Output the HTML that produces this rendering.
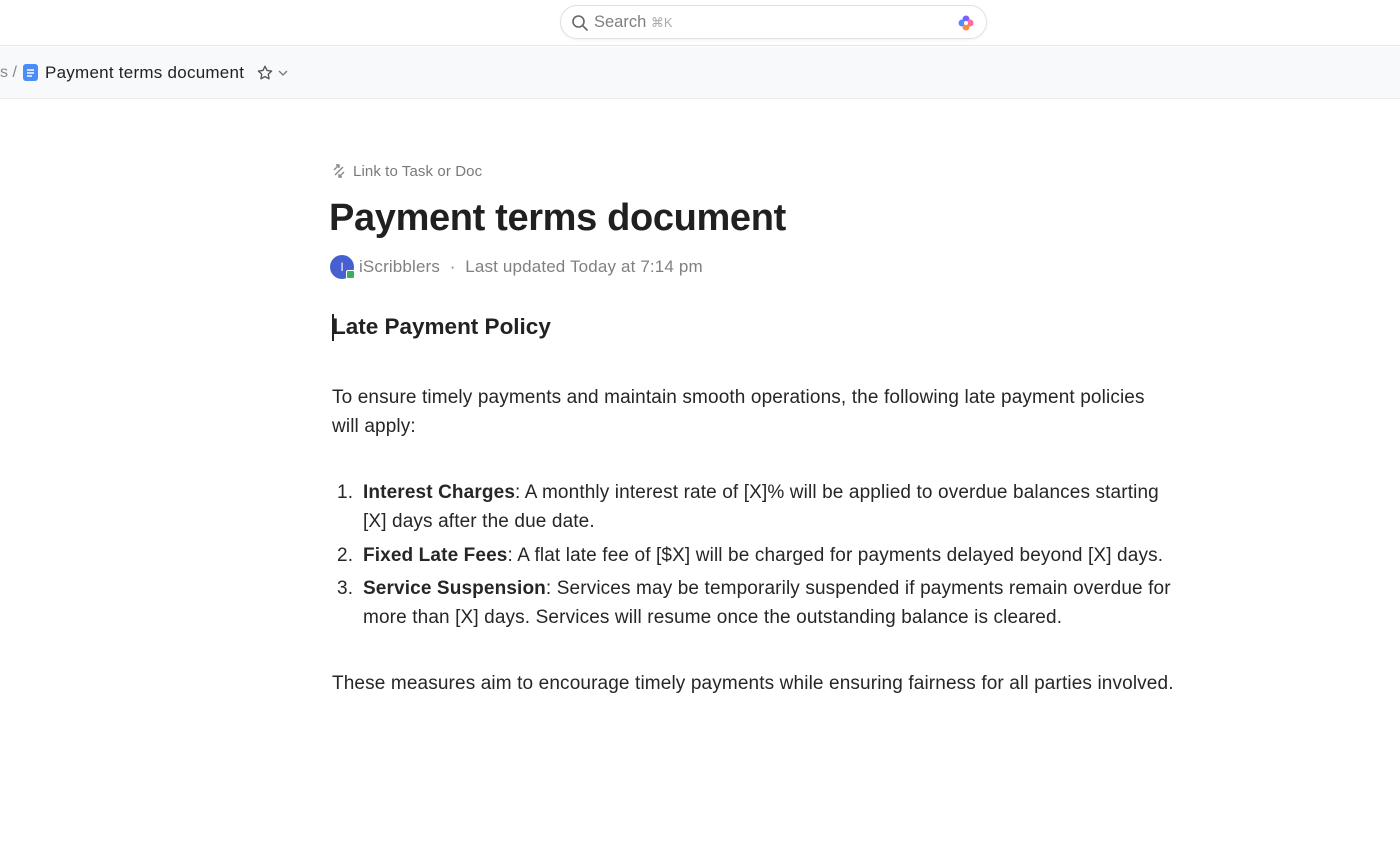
<!DOCTYPE html>
<html><head><meta charset="utf-8"><style>
*{margin:0;padding:0;box-sizing:border-box}
body{width:1400px;height:866px;background:#fff;font-family:"Liberation Sans",sans-serif;color:#202020;position:relative;overflow:hidden}
.top{position:absolute;left:0;top:0;width:1400px;height:46px;background:#fff;border-bottom:1px solid #e6e6e6}
.search{position:absolute;left:560px;top:5px;width:427px;height:34px;border:1px solid #e0e0e0;border-radius:17px;box-shadow:0 1px 2px rgba(0,0,0,.06)}
.search span{position:absolute;left:33px;top:7px;font-size:16.5px;color:#808080}
.search small{font-size:13px;color:#aaa}
.bar{position:absolute;left:0;top:47px;width:1400px;height:52px;background:#f8f9fa;border-bottom:1px solid #ececec}
.bc{position:absolute;left:45px;top:16px;font-size:17px;color:#222;letter-spacing:.25px}
.abs{position:absolute;white-space:nowrap}
p.t{font-size:19px;line-height:29px;color:#262626;letter-spacing:.13px}
</style></head><body>
<div class="top"><div class="search">
<svg style="position:absolute;left:10px;top:8px" width="18" height="18" viewBox="0 0 18 18"><circle cx="7.5" cy="7.5" r="5.5" fill="none" stroke="#666" stroke-width="1.6"/><path d="M11.5 11.5L16 16" stroke="#666" stroke-width="1.6" stroke-linecap="round"/></svg>
<span>Search <small>⌘K</small></span>
<svg style="position:absolute;left:396px;top:8px" width="18" height="18" viewBox="0 0 18 18"><circle cx="9" cy="5" r="3.5" fill="#7b61ff"/><circle cx="5" cy="9" r="3.5" fill="#4c8dff"/><circle cx="13" cy="9" r="3.5" fill="#ff6aa0"/><circle cx="9" cy="13" r="3.5" fill="#ff8a3d"/><circle cx="9" cy="9" r="2" fill="#fff"/></svg>
</div></div>
<div class="bar">
<div class="abs" style="left:0;top:17px;font-size:16px;color:#888">s /</div>
<svg class="abs" style="left:23px;top:17px" width="15" height="17" viewBox="0 0 15 17"><rect width="15" height="17" rx="3" fill="#4a8df8"/><path d="M4 6h7M4 9h7M4 12h5" stroke="#fff" stroke-width="1.4"/></svg>
<div class="bc">Payment terms document</div>
<svg class="abs" style="left:256px;top:17px" width="18" height="18" viewBox="0 0 24 24"><path d="M12 3l2.7 5.6 6.1.8-4.5 4.2 1.1 6.1L12 16.8 6.6 19.7l1.1-6.1L3.2 9.4l6.1-.8z" fill="none" stroke="#555" stroke-width="1.8" stroke-linejoin="round"/></svg>
<svg class="abs" style="left:278px;top:22px" width="10" height="8" viewBox="0 0 10 8"><path d="M1 2l4 4 4-4" fill="none" stroke="#777" stroke-width="1.3"/></svg>
</div>
<svg class="abs" style="left:331px;top:163px" width="16" height="16" viewBox="0 0 16 16"><path d="M3 7l5-5M5 2h3v3M13 9l-5 5M11 14H8v-3M4 12l8-8" fill="none" stroke="#888" stroke-width="1.4"/></svg>
<div class="abs" style="left:353px;top:163px;font-size:15px;color:#7a7a7a;letter-spacing:.1px">Link to Task or Doc</div>
<div class="abs" style="left:329px;top:197px;font-size:38px;font-weight:bold;color:#202020;letter-spacing:-.35px">Payment terms document</div>
<div class="abs" style="left:330px;top:255px;width:24px;height:24px;border-radius:50%;background:#4660d0;color:#fff;font-size:12px;text-align:center;line-height:24px">I</div>
<div class="abs" style="left:346px;top:270px;width:9px;height:9px;background:#3fae5a;border:1.5px solid #fff;border-radius:2px"></div>
<div class="abs" style="left:359px;top:257px;font-size:17px;color:#808080;letter-spacing:.15px">iScribblers &nbsp;·&nbsp; Last updated Today at 7:14 pm</div>
<div class="abs" style="left:332px;top:314px;width:2px;height:27px;background:#222"></div>
<div class="abs" style="left:332px;top:314px;font-size:22.5px;font-weight:bold;color:#222">Late Payment Policy</div>
<p class="t abs" style="left:332px;top:383px">To ensure timely payments and maintain smooth operations, the following late payment policies<br>will apply:</p>
<p class="t abs" style="left:337px;top:478px">1.</p>
<p class="t abs" style="left:363px;top:478px"><b>Interest Charges</b>: A monthly interest rate of [X]% will be applied to overdue balances starting<br>[X] days after the due date.</p>
<p class="t abs" style="left:337px;top:541px">2.</p>
<p class="t abs" style="left:363px;top:541px"><b>Fixed Late Fees</b>: A flat late fee of [$X] will be charged for payments delayed beyond [X] days.</p>
<p class="t abs" style="left:337px;top:574px">3.</p>
<p class="t abs" style="left:363px;top:574px"><b>Service Suspension</b>: Services may be temporarily suspended if payments remain overdue for<br>more than [X] days. Services will resume once the outstanding balance is cleared.</p>
<p class="t abs" style="left:332px;top:669px">These measures aim to encourage timely payments while ensuring fairness for all parties involved.</p>
</body></html>
